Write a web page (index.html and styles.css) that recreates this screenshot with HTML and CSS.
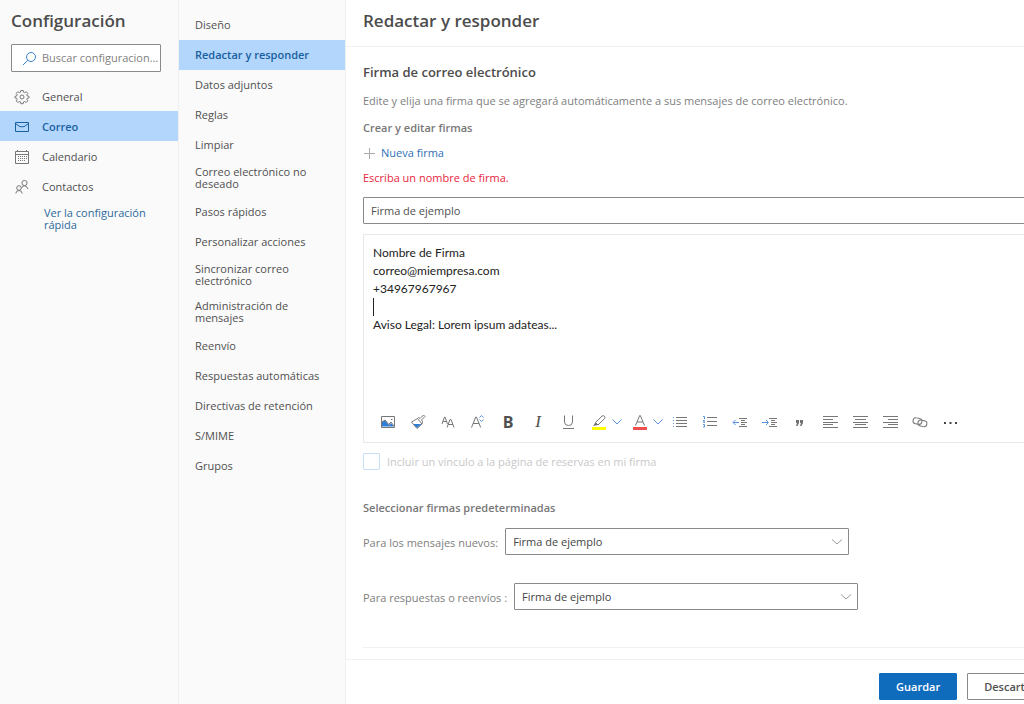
FILE: index.html
```html
<!DOCTYPE html>
<html lang="es">
<head>
    <meta charset="UTF-8">
    <meta name="viewport" content="width=device-width, initial-scale=1.0">
    <title>Configuración</title>
    <link rel="stylesheet" href="styles.css">
</head>
<body>
    <div class="settings">
        <nav class="sidebar">
            <h1>Configuración</h1>
            <div class="search">
                <svg width="15" height="15" viewBox="0 0 15 15"><circle cx="9" cy="6" r="4.5"/><path d="M5.8 9.2L1 14"/></svg>
                <input type="text" aria-label="Buscar configuración" placeholder="Buscar configuraciones">
            </div>
            <a class="section" href="#">
                <svg width="16" height="16" viewBox="0 0 16 16"><circle cx="8" cy="8" r="2"/><path d="M6.8 1.5h2.4l.4 1.8 1 .4 1.6-1 1.6 1.6-1 1.6.4 1 1.8.4v1.6l-1.8.4-.4 1 1 1.6-1.6 1.6-1.6-1-1 .4-.4 1.8H6.8l-.4-1.8-1-.4-1.6 1-1.6-1.6 1-1.6-.4-1L1 8.9V7.3l1.8-.4.4-1-1-1.6 1.6-1.6 1.6 1 1-.4z"/></svg>
                General
            </a>
            <a class="section selected" href="#">
                <svg width="16" height="16" viewBox="0 0 16 16"><path d="M1.5 3.5h13v9h-13zM1.5 4.5l4.5 3.2h4l4.5-3.2"/></svg>
                Correo
            </a>
            <a class="section" href="#">
                <svg width="16" height="16" viewBox="0 0 16 16"><path d="M1.5 2.5h13v12h-13zM1.5 5.5h13M3.5 1v2M12.5 1v2"/><path stroke-dasharray="1 1" d="M4.5 7v6M6.5 7v6M8.5 7v6M10.5 7v6M12.5 7v4"/></svg>
                Calendario
            </a>
            <a class="section" href="#">
                <svg width="16" height="16" viewBox="0 0 16 16"><circle cx="10.5" cy="4" r="2.6"/><path d="M7.5 9q.8-2.2 3-2.2T14 10"/><circle cx="5" cy="9" r="2.3"/><path d="M1.8 14.5q.3-3 3.2-3t3.2 3"/></svg>
                Contactos
            </a>
            <a class="quick" href="#">Ver la configuración rápida</a>
        </nav>

        <nav class="categories">
            <a href="#">Diseño</a>
            <a class="selected" href="#">Redactar y responder</a>
            <a href="#">Datos adjuntos</a>
            <a href="#">Reglas</a>
            <a href="#">Limpiar</a>
            <a href="#">Correo electrónico no deseado</a>
            <a href="#">Pasos rápidos</a>
            <a href="#">Personalizar acciones</a>
            <a href="#">Sincronizar correo electrónico</a>
            <a href="#">Administración de mensajes</a>
            <a href="#">Reenvío</a>
            <a href="#">Respuestas automáticas</a>
            <a href="#">Directivas de retención</a>
            <a href="#">S/MIME</a>
            <a href="#">Grupos</a>
        </nav>

        <main>
            <header><h1>Redactar y responder</h1></header>

            <div class="content">
                <h2>Firma de correo electrónico</h2>
                <p class="description">Edite y elija una firma que se agregará automáticamente a sus mensajes de correo electrónico.</p>
                <h3>Crear y editar firmas</h3>
                <button class="new" type="button">
                    <svg width="12" height="12" viewBox="0 0 12 12"><path d="M6.5 1v11M1 6.5h11"/></svg>
                    Nueva firma
                </button>
                <p class="error">Escriba un nombre de firma.</p>
                <input class="name" type="text" aria-label="Nombre de firma" value="Firma de ejemplo">

                <div class="editor">
                    <div class="text" contenteditable="true" role="textbox" aria-multiline="true" aria-label="Firma">
                        <div>Nombre de Firma</div>
                        <div>correo@miempresa.com</div>
                        <div>+34967967967</div>
                        <div><span class="caret"></span></div>
                        <div>Aviso Legal: Lorem ipsum adateas...</div>
                    </div>
                    <div class="toolbar">
                        <button type="button" aria-label="Imagen"><svg width="16" height="16" viewBox="0 0 16 16"><path d="M1.5 2.5h13v11h-13z"/><path class="fill-blue" d="M2 12.5V8l3-2 4 5 2-2 3 3.5z"/><path d="M2 8l3-2 5 6M9 10l2-2 3 4M11 5.5h1.5"/></svg></button>
                        <button type="button" aria-label="Copiar formato"><svg width="16" height="16" viewBox="0 0 16 16"><path class="fill-blue" d="M3 10h8.500L7 14z"/><path d="M1.500 8l6-3.500 4.500 5.500-5 4.500zM7.500 4.500l1-1 1.500 1L13.500 1 15 2.500 11.500 6l1 1.500-.5 2.500"/></svg></button>
                        <button type="button" aria-label="Fuente"><svg width="16" height="16" viewBox="0 0 16 16"><path d="M2 10l2.500-7h.5l2.500 7M3 7.500h3.500M7 13.500l3-8h1l3 8M8 10.500h5"/></svg></button>
                        <button type="button" aria-label="Tamaño de fuente"><svg width="16" height="16" viewBox="0 0 16 16"><path d="M1.500 13.500L5.800 3h.6l4.300 10.500M3 9.500h6"/><path class="blue" d="M9.500 3.500l2-2 2 2M9.500 5.500l2 2 2-2"/></svg></button>
                        <button type="button" class="bold" aria-label="Negrita">B</button>
                        <button type="button" class="italic" aria-label="Cursiva">I</button>
                        <button type="button" aria-label="Subrayado"><svg width="16" height="16" viewBox="0 0 16 16"><path d="M4.500 1.500v6.500q0 3.500 4 3.500t4-3.500V1.500M3 14.500h11"/></svg></button>
                        <div class="group">
                            <button type="button" aria-label="Resaltado"><svg width="16" height="16" viewBox="0 0 16 16"><path class="yellow" d="M1 14.500h14"/><path d="M4.500 8.500L11 2q1.500-.8 2.500.3t0 2.400L7 11z"/><path class="fill-gray" d="M4.500 8.500L2 12l5-1z"/></svg></button>
                            <button type="button" aria-label="Colores de resaltado"><svg width="10" height="8" viewBox="0 0 10 8"><path class="blue" d="M.5 1.500L5 6l4.500-4.500"/></svg></button>
                        </div>
                        <div class="group">
                            <button type="button" aria-label="Color de fuente"><svg width="16" height="16" viewBox="0 0 16 16"><path class="red" d="M1 14.500h14"/><path d="M3.500 11.500L7.700 1.500h.6l4.200 10M5 8h6"/></svg></button>
                            <button type="button" aria-label="Colores de fuente"><svg width="10" height="8" viewBox="0 0 10 8"><path class="blue" d="M.5 1.500L5 6l4.500-4.500"/></svg></button>
                        </div>
                        <button type="button" aria-label="Viñetas"><svg width="16" height="16" viewBox="0 0 16 16"><path d="M4 3.500h11M4 6.500h11M4 9.500h11M4 12.500h11"/><path class="blue" d="M1 3.500h1M1 6.500h1M1 9.500h1M1 12.500h1"/></svg></button>
                        <button type="button" aria-label="Numeración"><svg width="16" height="16" viewBox="0 0 16 16"><path d="M5 3.500h10M5 7.500h10M5 11.500h10"/><path class="blue" d="M1 2.500h1.500V5M1 6.500h1.500L1.500 8.500H3M1 10.500h1.500v2.500H1"/></svg></button>
                        <button type="button" aria-label="Disminuir sangría"><svg width="16" height="16" viewBox="0 0 16 16"><path d="M7 4.500h8M9 6.500h4M9 8.500h6M9 10.500h4M7 12.500h8"/><path class="blue" d="M1 8.500h6M3.500 6L1 8.500 3.500 11"/></svg></button>
                        <button type="button" aria-label="Aumentar sangría"><svg width="16" height="16" viewBox="0 0 16 16"><path d="M7 4.500h8M9 6.500h4M9 8.500h6M9 10.500h4M7 12.500h8"/><path class="blue" d="M0 8.500h6M4 6l2.500 2.500L4 11"/></svg></button>
                        <button type="button" aria-label="Cita"><svg width="16" height="16" viewBox="0 0 16 16"><path class="fill-gray" d="M4 6h3v3l-1.500 3H4l1-3H4zM8 6h3v3l-1.500 3H8l1-3H8z"/></svg></button>
                        <button type="button" aria-label="Alinear a la izquierda"><svg width="16" height="16" viewBox="0 0 16 16"><path d="M1 2.500h15M1 5.500h10M1 8.500h15M1 10.500h10M1 13.500h15"/></svg></button>
                        <button type="button" aria-label="Centrar"><svg width="16" height="16" viewBox="0 0 16 16"><path d="M1 2.500h15M3 5.500h11M1 8.500h15M3 10.500h11M1 13.500h15"/></svg></button>
                        <button type="button" aria-label="Alinear a la derecha"><svg width="16" height="16" viewBox="0 0 16 16"><path d="M1 2.500h15M6 5.500h10M1 8.500h15M6 10.500h10M1 13.500h15"/></svg></button>
                        <button type="button" aria-label="Vínculo"><svg width="16" height="16" viewBox="0 0 16 16"><rect x="1" y="4" width="9" height="6" rx="3" transform="rotate(10 5 7)"/><rect x="6" y="6.500" width="9" height="6" rx="3" transform="rotate(10 11 9)"/></svg></button>
                        <button type="button" aria-label="Más opciones"><svg width="16" height="16" viewBox="0 0 16 16"><path class="dots" d="M2 9h2M7.500 9h2M13 9h2"/></svg></button>
                    </div>
                </div>

                <label class="booking"><input type="checkbox" disabled> Incluir un vínculo a la página de reservas en mi firma</label>

                <h3 class="defaults">Seleccionar firmas predeterminadas</h3>
                <div class="row">
                    <label for="newMessages">Para los mensajes nuevos:</label>
                    <div class="select">
                        <select id="newMessages"><option>Firma de ejemplo</option></select>
                        <svg width="12" height="8" viewBox="0 0 12 8"><path d="M1 1.500L6 6l5-4.500"/></svg>
                    </div>
                </div>
                <div class="row">
                    <label for="replies">Para respuestas o reenvíos :</label>
                    <div class="select">
                        <select id="replies"><option>Firma de ejemplo</option></select>
                        <svg width="12" height="8" viewBox="0 0 12 8"><path d="M1 1.500L6 6l5-4.500"/></svg>
                    </div>
                </div>
                <hr>
            </div>

            <footer>
                <button class="save" type="button">Guardar</button>
                <button class="discard" type="button">Descartar</button>
            </footer>
        </main>
    </div>
</body>
</html>
```
FILE: styles.css
```css
* {
    box-sizing: border-box;
}
body {
    margin: 0;
    overflow: hidden;
    font-family: "Open Sans", "Noto Sans", sans-serif;
    font-size: 11px;
    line-height: 16px;
    color: #505050;
}
h1, h2, h3, p {
    margin: 0;
}
h1 {
    font-size: 17px;
    line-height: 24px;
    font-weight: 600;
    color: #4c4c4c;
}
a {
    color: inherit;
    text-decoration: none;
}
button, input, select {
    font: inherit;
    color: inherit;
}
svg {
    fill: none;
    stroke: #777;
    flex: none;
}
.settings {
    display: flex;
    min-width: 1070px;
    min-height: 100vh;
}

/* left column */
.sidebar {
    width: 178px;
    flex: none;
    background: #fafafa;
}
.sidebar h1 {
    padding: 9px 11px 11px;
}
.search {
    display: flex;
    align-items: center;
    height: 28px;
    margin: 0 17px 9px 11px;
    padding-left: 10px;
    gap: 5px;
    border: 1px solid #8a8a8a;
    border-radius: 1px;
    background: #fff;
}
.search svg {
    stroke: #3b82d0;
}
.search input {
    flex: 1;
    min-width: 0;
    border: 0;
    padding: 0 1px 0 0;
    outline: none;
    background: none;
    text-overflow: ellipsis;
}
.search input::placeholder {
    color: #808080;
}
.section {
    display: flex;
    align-items: center;
    height: 30px;
    padding: 1px 0 0 14px;
    gap: 12px;
}
.selected {
    background: #b3d6fc;
    color: #19609f;
    font-weight: 600;
}
.selected svg {
    stroke: #19609f;
}
.quick {
    display: block;
    padding: 6px 20px 6px 44px;
    line-height: 12px;
    color: #2c699c;
}

/* middle column */
.categories {
    width: 168px;
    flex: none;
    padding-top: 10px;
    border-left: 1px solid #f0f0f0;
    border-right: 1px solid #f0f0f0;
    background: #fafafa;
}
.categories a {
    display: flex;
    align-items: center;
    min-height: 30px;
    padding: 6px 20px 7px 16px;
    line-height: 12px;
}

/* right pane */
main {
    flex: 1;
    min-width: 0;
    display: flex;
    flex-direction: column;
}
header {
    padding: 9px 17px 13px;
    border-bottom: 1px solid #f0f0f0;
}
.content {
    flex: 1;
    padding: 17px 17px 0;
}
h2 {
    font-size: 13px;
    font-weight: 600;
    color: #4c4c4c;
}
h3 {
    font-size: 11px;
    font-weight: 600;
    color: #777;
}
.description {
    margin: 13px 0 11px;
    color: #808080;
}
.new {
    display: flex;
    align-items: center;
    gap: 6px;
    margin: 9px 0;
    padding: 0;
    border: 0;
    background: none;
    color: #2f6fb5;
}
.new svg {
    stroke: #aaa;
}
.error {
    color: #e8263c;
}
.name {
    display: block;
    width: 100%;
    height: 27px;
    margin: 11px 0 10px;
    padding: 0 7px;
    border: 1px solid #8a8a8a;
    border-radius: 1px;
}
.editor {
    border: 1px solid #e8e8e8;
}
.text {
    height: 172px;
    padding: 9px;
    font-family: Lato, sans-serif;
    font-size: 12px;
    line-height: 18px;
    color: #222;
    outline: none;
}
.text div {
    min-height: 18px;
}
.caret {
    display: block;
    width: 1px;
    height: 18px;
    background: #222;
}
.toolbar {
    display: flex;
    height: 35px;
    padding-left: 9px;
}
.toolbar button {
    display: flex;
    align-items: center;
    justify-content: center;
    width: 30px;
    height: 30px;
    padding: 0;
    border: 0;
    background: none;
}
.toolbar .bold {
    font-size: 16px;
    font-weight: 700;
}
.toolbar .italic {
    font-family: "Liberation Serif", serif;
    font-size: 17px;
    font-style: italic;
}
.group {
    display: flex;
    width: 41px;
    padding-left: 3px;
}
.toolbar .group button {
    width: 26px;
}
.toolbar .group button + button {
    width: 10px;
}
.blue {
    stroke: #5b92dc;
}
.fill-blue {
    fill: #2f7fd8;
    stroke: none;
}
.fill-gray {
    fill: #707070;
    stroke: none;
}
.yellow {
    stroke: #ffff00;
    stroke-width: 3;
}
.red {
    stroke: #ee5050;
    stroke-width: 3;
}
.dots {
    stroke: #444;
    stroke-width: 2;
}
.booking {
    display: flex;
    align-items: center;
    gap: 7px;
    margin-top: 10px;
    color: #c8c8c8;
}
.booking input {
    appearance: none;
    width: 17px;
    height: 17px;
    margin: 0;
    border: 1px solid #c7e0f8;
    border-radius: 1px;
    background: #fff;
}
.defaults {
    margin: 30px 0 12px;
}
.row {
    display: flex;
    align-items: center;
    gap: 7px;
    margin-bottom: 27px;
    color: #808080;
}
.row label {
    padding-top: 3px;
}
.select {
    display: flex;
    align-items: center;
    position: relative;
    color: #444;
}
.select select {
    appearance: none;
    width: 344px;
    height: 27px;
    padding: 0 7px;
    border: 1px solid #8a8a8a;
    border-radius: 1px;
    background: #fff;
}
.select svg {
    position: absolute;
    right: 6px;
    stroke: #999;
    pointer-events: none;
}
.row + .row {
    margin-top: 28px;
}
hr {
    margin: 37px 0 0;
    border: 0;
    border-top: 1px solid #f0f0f0;
}
footer {
    display: flex;
    justify-content: flex-end;
    gap: 10px;
    padding: 13px 17px 4px;
    border-top: 1px solid #f0f0f0;
}
footer button {
    height: 27px;
    padding: 0 16px;
    border: 1px solid #8a8a8a;
    border-radius: 1px;
    background: #fff;
    font-weight: 600;
}
footer .save {
    border-color: #0f6cbd;
    background: #0f6cbd;
    color: #fff;
}
```
